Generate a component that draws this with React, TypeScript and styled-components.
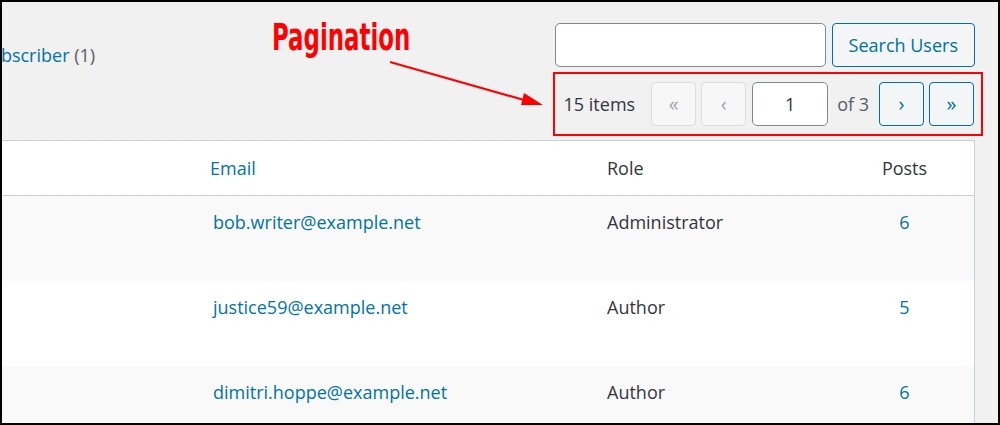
import styled, { createGlobalStyle } from 'styled-components';

const GlobalStyle = createGlobalStyle`
  html, body {
    margin: 0;
    padding: 0;
    background: #ffffff;
  }
  * {
    box-sizing: border-box;
  }
`;

const Frame = styled.div`
  position: relative;
  width: 1000px;
  height: 425px;
  border: 2px solid #000;
  background: #f1f1f1;
  overflow: hidden;
  padding-top: 21px;
  font-family: "Open Sans", "Noto Sans", sans-serif;
  font-size: 18px;
  color: #32373c;
`;

const TopArea = styled.div`
  display: flex;
  justify-content: space-between;
  align-items: flex-start;
`;

const Views = styled.div`
  margin-top: 20px;
  margin-left: -22px;
  line-height: 25px;
  white-space: nowrap;
`;

const ViewLink = styled.a`
  color: #0073aa;
  text-decoration: none;
`;

const Count = styled.span`
  color: #555d66;
`;

const TableNav = styled.div`
  display: flex;
  flex-direction: column;
  align-items: flex-end;
  margin-right: 23px;
`;

const SearchBox = styled.div`
  display: flex;
  gap: 6px;
`;

const SearchInput = styled.input`
  width: 271px;
  height: 44px;
  border: 1px solid #7e8993;
  border-radius: 5px;
  background: #fff;
  font: inherit;
`;

const Button = styled.button<{ $wide?: boolean }>`
  height: 44px;
  padding: 0 ${props => (props.$wide ? '16px' : '0')};
  width: ${props => (props.$wide ? 'auto' : '45px')};
  border: 1px solid #0071a1;
  border-radius: 4px;
  background: #f3f5f6;
  color: #0071a1;
  font-family: "Open Sans", "Noto Sans", sans-serif;
  font-size: ${props => (props.$wide ? '18px' : '20px')};
  line-height: 1;
  display: flex;
  align-items: center;
  justify-content: center;
  cursor: pointer;

  &:disabled {
    border-color: #dddddd;
    background: #f7f7f7;
    color: #a0a5aa;
    cursor: default;
  }
`;

const Pagination = styled.div`
  display: flex;
  align-items: center;
  margin-top: 5px;
  margin-right: -8px;
  border: 2px solid #ff0000;
  padding: 8px 7px 8px 9px;
`;

const DisplayingNum = styled.span`
  margin-right: 16px;
  color: #32373c;
`;

const PagingGroup = styled.div`
  display: flex;
  align-items: center;
  gap: 5px;
`;

const PageInput = styled.input`
  width: 76px;
  height: 44px;
  margin: 0 9px 0 6px;
  border: 1px solid #7e8993;
  border-radius: 5px;
  background: #fff;
  text-align: center;
  font-family: "Open Sans", "Noto Sans", sans-serif;
  font-size: 18px;
  color: #32373c;
`;

const TotalPages = styled.span`
  margin-right: 10px;
  color: #555d66;
`;

const Table = styled.div`
  margin: 4px 23px 0 -32px;
  border: 1px solid #ccd0d4;
  background: #fff;
`;

const Row = styled.div<{ $head?: boolean; $alt?: boolean }>`
  display: grid;
  grid-template-columns: 229px 397px 236px 1fr;
  height: ${props => (props.$head ? '55px' : '85px')};
  align-items: ${props => (props.$head ? 'center' : 'start')};
  padding-top: ${props => (props.$head ? '0' : '14px')};
  border-bottom: ${props => (props.$head ? '1px solid #ccd0d4' : 'none')};
  background: ${props => (props.$alt ? '#f9f9f9' : '#fff')};
  line-height: 25px;
`;

const Cell = styled.div<{ $indent?: number }>`
  padding-left: ${props => props.$indent ?? 10}px;
  white-space: nowrap;
`;

const NumCell = styled.div`
  text-align: center;
  padding-left: 2px;
`;

const Link = styled.a`
  color: #0073aa;
  text-decoration: none;
`;

const Callout = styled.div`
  position: absolute;
  left: 270px;
  top: 16px;
  font-family: "DejaVu Sans Condensed", "DejaVu Sans", sans-serif;
  font-weight: bold;
  font-size: 38px;
  line-height: 38px;
  color: #ff0000;
  transform: scaleX(0.67);
  transform-origin: left top;
  white-space: nowrap;
`;

const Arrow = styled.svg`
  position: absolute;
  left: 378px;
  top: 48px;
`;

const users = [
  { email: 'bob.writer@example.net', role: 'Administrator', posts: 6 },
  { email: 'justice59@example.net', role: 'Author', posts: 5 },
  { email: 'dimitri.hoppe@example.net', role: 'Author', posts: 6 },
];

export default function App() {
  return (
    <>
      <GlobalStyle />
      <Frame>
        <TopArea>
          <Views>
            <ViewLink>
              Subscriber <Count>(1)</Count>
            </ViewLink>
          </Views>
          <TableNav>
            <SearchBox>
              <SearchInput type="search" />
              <Button $wide>Search Users</Button>
            </SearchBox>
            <Pagination>
              <DisplayingNum>15 items</DisplayingNum>
              <PagingGroup>
                <Button disabled>«</Button>
                <Button disabled>‹</Button>
              </PagingGroup>
              <PageInput defaultValue="1" />
              <TotalPages>of 3</TotalPages>
              <PagingGroup>
                <Button>›</Button>
                <Button>»</Button>
              </PagingGroup>
            </Pagination>
          </TableNav>
        </TopArea>

        <Table>
          <Row $head>
            <Cell />
            <Cell>
              <Link>Email</Link>
            </Cell>
            <Cell>Role</Cell>
            <NumCell>Posts</NumCell>
          </Row>
          {users.map((u, i) => (
            <Row key={u.email} $alt={i % 2 === 0}>
              <Cell />
              <Cell $indent={13}>
                <Link>{u.email}</Link>
              </Cell>
              <Cell>{u.role}</Cell>
              <NumCell>
                <Link>{u.posts}</Link>
              </NumCell>
            </Row>
          ))}
        </Table>

        <Callout>Pagination</Callout>
        <Arrow width="170" height="62" viewBox="0 0 170 62">
          <line x1="10" y1="12" x2="144" y2="50" stroke="#ff0000" strokeWidth="2.2" />
          <polygon points="163,55 141,55 144,43" fill="#ff0000" />
        </Arrow>
      </Frame>
    </>
  );
}
